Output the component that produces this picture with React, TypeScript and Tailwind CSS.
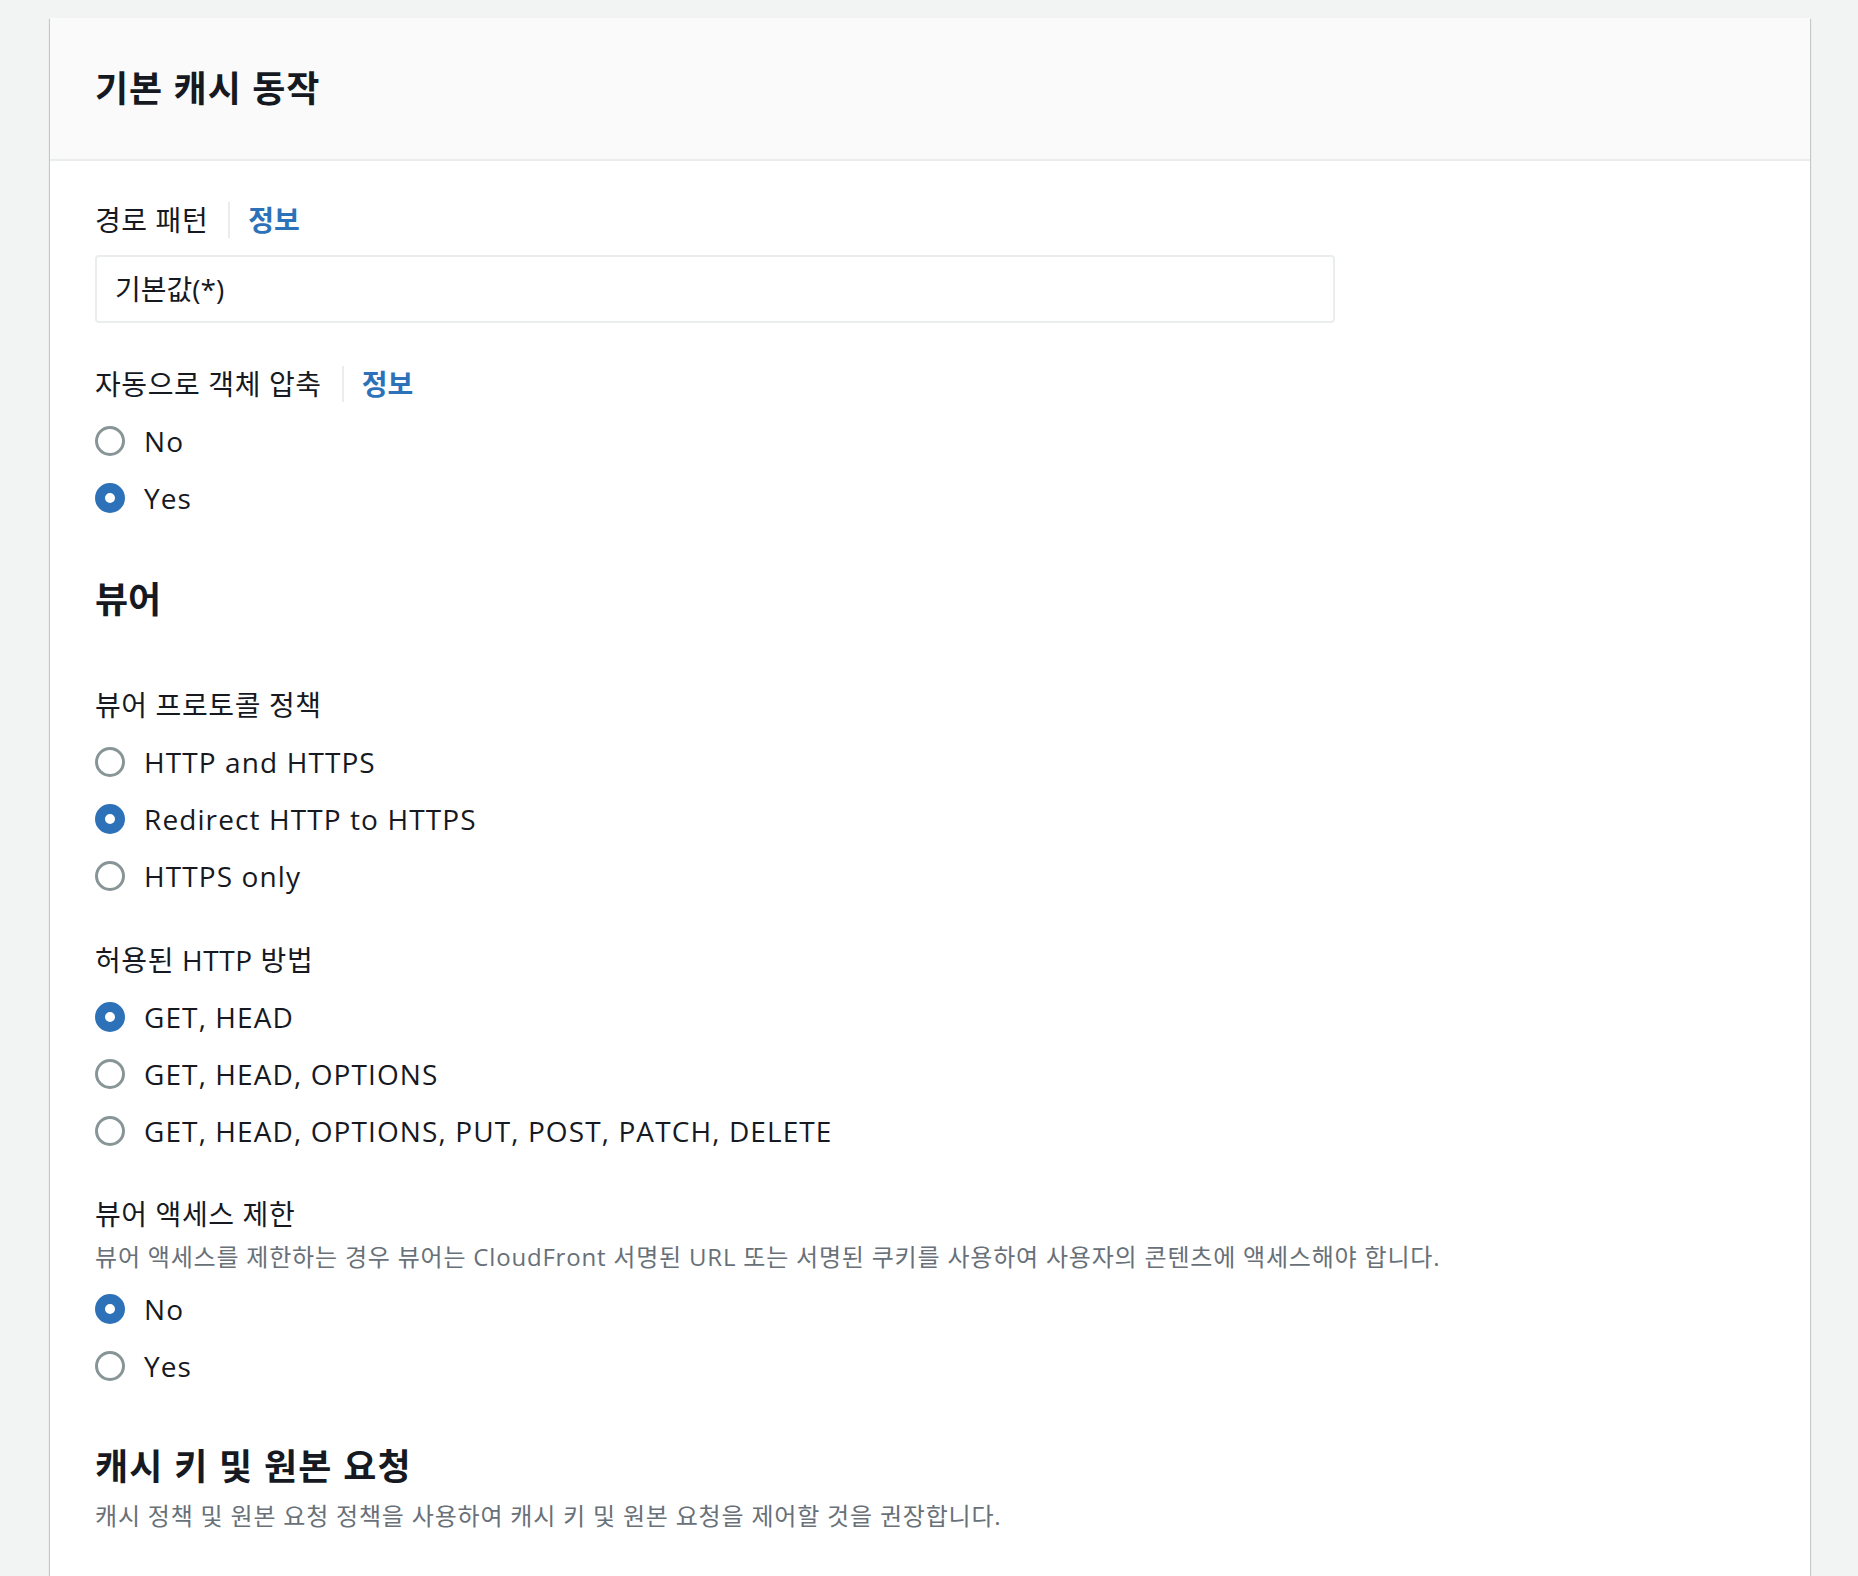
import React from 'react';

const font = "font-['Open_Sans','Noto_Sans_CJK_KR',sans-serif]";

type RadioProps = { label: string; checked?: boolean };

const Radio = ({ label, checked }: RadioProps) => {
    return (
        <div className="flex h-[57px] items-center">
            {checked ? (
                <span className="box-border h-[30px] w-[30px] rounded-full border-[10px] border-[#2d72b8] bg-white"></span>
            ) : (
                <span className="box-border h-[30px] w-[30px] rounded-full border-[3px] border-[#879596] bg-white"></span>
            )}
            <span className="ml-[19px] text-[28px] font-medium leading-[40px] tracking-[1.1px] text-[#16191f]">{label}</span>
        </div>
    );
};

const Label = ({ text, info, className }: { text: string; info?: boolean; className?: string }) => {
    return (
        <div className={"flex h-[40px] items-center " + (className || '')}>
            <span className="text-[28px] leading-[40px] tracking-[0.6px] text-[#16191f]">{text}</span>
            {info && (
                <>
                    <span className="ml-[20px] mr-[18px] h-[36px] w-[2px] bg-[#eaeded]"></span>
                    <span className="text-[28px] font-bold leading-[40px] text-[#2d72b8]">정보</span>
                </>
            )}
        </div>
    );
};

const App = () => {
    return (
        <div className={"min-h-[1576px] bg-[#f2f3f3] pl-[50px] pr-[48px] pt-[18px] " + font}>
            <div className="bg-white shadow-[0_1px_1px_0_rgba(0,28,36,0.3),1px_1px_1px_0_rgba(0,28,36,0.15),-1px_1px_1px_0_rgba(0,28,36,0.15)]">
                <div className="flex h-[143px] items-center border-b-2 border-[#eaeded] bg-[#fafafa] px-[45px]">
                    <h2 className="text-[36px] font-bold leading-[48px] tracking-[1px] text-[#16191f]">기본 캐시 동작</h2>
                </div>

                <div className="px-[45px] pb-[80px] pt-[39px]">
                    <Label text="경로 패턴" info />
                    <div className="mt-[15px] flex h-[68px] w-[1240px] items-center rounded-[4px] border-2 border-[#eaeded] px-[18px] text-[28px] text-[#16191f]">
                        기본값(*)
                    </div>

                    <Label text="자동으로 객체 압축" info className="mt-[41px]" />
                    <div className="mt-[8px]">
                        <Radio label="No" />
                        <Radio label="Yes" checked />
                    </div>

                    <h3 className="mt-[50px] text-[36px] font-bold leading-[48px] text-[#16191f]">뷰어</h3>

                    <Label text="뷰어 프로토콜 정책" className="mt-[61px]" />
                    <div className="mt-[8px]">
                        <Radio label="HTTP and HTTPS" />
                        <Radio label="Redirect HTTP to HTTPS" checked />
                        <Radio label="HTTPS only" />
                    </div>

                    <Label text="허용된 HTTP 방법" className="mt-[36px]" />
                    <div className="mt-[8px]">
                        <Radio label="GET, HEAD" checked />
                        <Radio label="GET, HEAD, OPTIONS" />
                        <Radio label="GET, HEAD, OPTIONS, PUT, POST, PATCH, DELETE" />
                    </div>

                    <Label text="뷰어 액세스 제한" className="mt-[35px]" />
                    <p className="mt-[7px] text-[24px] leading-[32px] tracking-[0.8px] text-[#687078]">
                        뷰어 액세스를 제한하는 경우 뷰어는 CloudFront 서명된 URL 또는 서명된 쿠키를 사용하여 사용자의 콘텐츠에 액세스해야 합니다.
                    </p>
                    <div className="mt-[7px]">
                        <Radio label="No" checked />
                        <Radio label="Yes" />
                    </div>

                    <h3 className="mt-[49px] text-[36px] font-bold leading-[48px] tracking-[1.2px] text-[#16191f]">캐시 키 및 원본 요청</h3>
                    <p className="mt-[9px] text-[24px] leading-[32px] tracking-[0.8px] text-[#687078]">
                        캐시 정책 및 원본 요청 정책을 사용하여 캐시 키 및 원본 요청을 제어할 것을 권장합니다.
                    </p>
                </div>
            </div>
        </div>
    );
};

export default App;
